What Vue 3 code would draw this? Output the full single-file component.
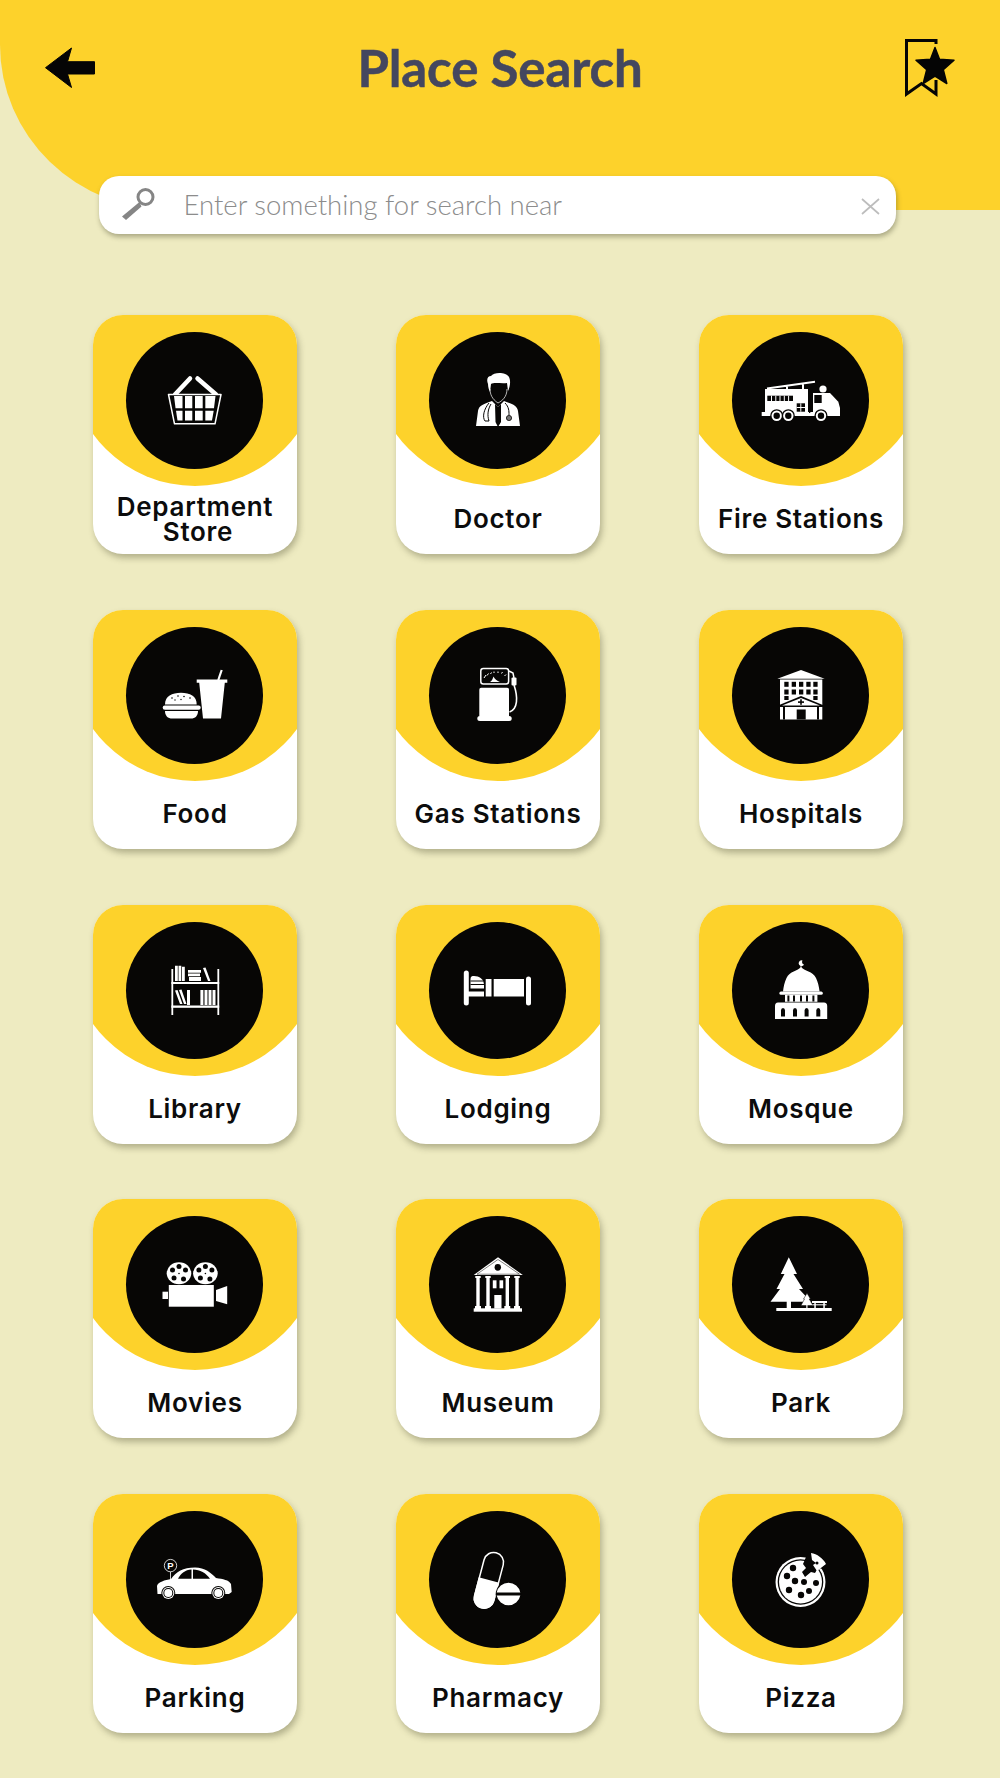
<script setup>
const places = [
  { id: 'basket', lines: ['Department', 'Store'] },
  { id: 'doctor', lines: ['Doctor'] },
  { id: 'truck', lines: ['Fire Stations'] },
  { id: 'food', lines: ['Food'] },
  { id: 'gas', lines: ['Gas Stations'] },
  { id: 'hospital', lines: ['Hospitals'] },
  { id: 'library', lines: ['Library'] },
  { id: 'bed', lines: ['Lodging'] },
  { id: 'mosque', lines: ['Mosque'] },
  { id: 'movies', lines: ['Movies'] },
  { id: 'museum', lines: ['Museum'] },
  { id: 'park', lines: ['Park'] },
  { id: 'parking', lines: ['Parking'] },
  { id: 'pharmacy', lines: ['Pharmacy'] },
  { id: 'pizza', lines: ['Pizza'] }
]
const winCols = [33.3, 40.7, 48, 55.3, 62.3]
</script>

<template>
  <div class="page">
    <header class="top">
      <svg class="back" width="50" height="41" viewBox="0 0 50 41">
        <polygon points="0.500,20.700 26.500,1 22.500,14.700 49.500,14.700 49.500,27 22.500,27 26.500,40.500" fill="#050505" stroke="#050505" stroke-linejoin="round" />
      </svg>
      <h1 class="title">Place Search</h1>
      <svg class="saved" width="50" height="58" viewBox="0 0 50 58">
        <path d="M31 5V1.500H1.500V55L16.500 44.500L31 55V41" fill="none" stroke="#050505" stroke-width="3" />
        <path d="M30 8.500L34.500 20.200L49 21.200L38.300 30.600L41.800 44.500L30 37L18.200 44.500L21.700 30.600L11 21.200L25.500 20.200Z" fill="#050505" stroke="#050505" stroke-width="1.500" stroke-linejoin="round" />
      </svg>
    </header>

    <div class="search">
      <svg class="lens" width="34" height="32" viewBox="0 0 34 32">
        <circle cx="24.500" cy="9" r="7.500" fill="none" stroke="#858585" stroke-width="3" />
        <path d="M18.500 14L1 28.500L5 32L20.500 18.500Z" fill="#858585" />
      </svg>
      <span class="hint">Enter something for search near</span>
      <svg class="clear" width="19" height="17" viewBox="0 0 19 17">
        <path d="M1 1L18 16M18 1L1 16" stroke="#bdbdbd" stroke-width="1.700" />
      </svg>
    </div>

    <main class="grid">
      <article v-for="p in places" :key="p.id" class="card">
        <div class="blob"></div>
        <div class="disc">
          <svg class="glyph" width="100" height="100" viewBox="0 0 100 100" fill="#fff">
            <g v-if="p.id === 'basket'">
              <path d="M30 43.500L45 27.500M52.500 27.500L71 43.500" stroke="#fff" stroke-width="4.500" stroke-linecap="round" fill="none" />
              <path d="M23.500 43.500H76L70 72.800H29.500Z" fill="#070605" stroke="#fff" stroke-width="1.500" stroke-linejoin="round" />
              <path d="M29 45H37.500V57.300H30.500Z" />
              <path d="M40 45H47.300V57.300H40Z" />
              <path d="M50 45H57.700V57.300H50Z" />
              <path d="M60.300 45H70.500L69 57.300H60.300Z" />
              <path d="M31 59.700H37.500V69.500H32.500Z" />
              <path d="M40 59.700H47.300V69.500H40Z" />
              <path d="M50 59.700H57.700V69.500H50Z" />
              <path d="M60.300 59.700H68.700L67 69.500H60.300Z" />
            </g>

            <g v-else-if="p.id === 'doctor'">
              <path d="M40 33C38 28 40 25 43 25C46 21 58 21 61 26C63 30 62 36 60 40L59 32C54 33 46 31 43 33L42 41C41 39 40 36 40 33Z" />
              <path d="M42 38C42 46 47 50 50 52C54 50 59 46 59 38" fill="none" stroke="#fff" stroke-width=".7" />
              <path d="M44 50C36 53 31 54 30 60L28 75H72L70 60C69 54 64 53 56 50L50 56Z" />
              <path d="M47 53L50 56L53 53V71L50 76L47.500 71Z" fill="#070605" />
              <path d="M41 52C36 58 34 66 37 70H41M43 53C40 58 39 64 41 70M57 52C61 56 61 60 61 64" fill="none" stroke="#070605" stroke-width="1" />
              <circle cx="61" cy="67" r="2.600" fill="#777" stroke="#070605" stroke-width=".8" />
            </g>

            <g v-else-if="p.id === 'truck'">
              <path d="M16 37.500L64 30.700M36 34.500V40M52 32.500V40" stroke="#fff" stroke-width="2" />
              <path d="M14 38H57V62H14Z" />
              <path d="M62 42H79L87.300 50.700L89 57V62H62Z" />
              <rect x="10.700" y="61" width="78.300" height="4" />
              <circle cx="72" cy="38" r="3.600" />
              <rect x="16.300" y="44.700" width="25.700" height="5.300" fill="#070605" />
              <path d="M20.500 44.700V50M24.800 44.700V50M29 44.700V50M33.300 44.700V50M37.600 44.700V50" stroke="#fff" stroke-width="1" />
              <rect x="45.700" y="52.300" width="8.300" height="8.400" fill="#070605" />
              <path d="M49.800 52.300V60.700M45.700 56.500H54" stroke="#fff" stroke-width="1" />
              <rect x="58" y="44" width="1.300" height="18" fill="#070605" />
              <rect x="63.300" y="44" width="7.400" height="8" fill="#070605" />
              <g v-for="x in [25.7, 37.3, 70]" :key="x">
                <circle :cx="x" cy="64.700" r="6.500" fill="#070605" />
                <circle :cx="x" cy="64.700" r="5.200" />
                <circle :cx="x" cy="64.700" r="3.200" fill="#070605" />
              </g>
            </g>

            <g v-else-if="p.id === 'food'">
              <path d="M20 59.500C20 51 27 47.800 36 47.800C45 47.800 51.700 51 51.700 59.500Z" />
              <g fill="#070605">
                <circle cx="27" cy="53" r=".8" /><circle cx="33" cy="51" r=".8" /><circle cx="39" cy="51.500" r=".8" /><circle cx="45" cy="53" r=".8" /><circle cx="30" cy="55" r=".7" /><circle cx="36" cy="54.500" r=".7" />
              </g>
              <rect x="17.700" y="60.500" width="38" height="4.300" rx="2.100" />
              <path d="M20 66H53C53 71 50 73.500 46 73.500H27C23 73.500 20 71 20 66Z" />
              <path d="M73.300 35L76.700 25" stroke="#fff" stroke-width="2.200" fill="none" />
              <path d="M51.700 34.500H82.300V37.800H79.800L76 73.500H58L54.200 37.800H51.700Z" />
            </g>

            <g v-else-if="p.id === 'gas'">
              <rect x="32.800" y="23.500" width="27.800" height="15.500" rx="2.500" fill="#070605" stroke="#fff" stroke-width="1.500" />
              <path d="M36 33L38 30M39 30.500L40.500 28.500M42.500 29L43.500 27.500M46 28V26.500M50 28V26.500M53.500 28.500L54.500 27M56.500 31L58 29.500" stroke="#fff" stroke-width="1" />
              <path d="M42 37C44 36 45 33 45.500 31.500C46.500 34 49 36 52 37Z" />
              <path d="M33.300 42.800H59C60.500 42.800 61 43.500 61 45V71H31.300V45C31.300 43.500 32 42.800 33.300 42.800Z" />
              <rect x="29.300" y="71" width="34.400" height="5" rx="2.500" />
              <path d="M61 26L65 28L66 33" fill="none" stroke="#fff" stroke-width="1.500" />
              <rect x="63.500" y="32.500" width="5" height="8" rx="1" />
              <path d="M66 40C70 52 70 64 61.500 67" fill="none" stroke="#fff" stroke-width="1.600" />
            </g>

            <g v-else-if="p.id === 'hospital'">
              <polygon points="50,25 26.300,33.800 73.700,33.800" />
              <rect x="29" y="34.500" width="42.300" height="40" />
              <g v-for="y in [36.8, 44.5]" :key="y">
                <rect v-for="x in winCols" :key="x" :x="x" :y="y" width="4.300" height="5" fill="#070605" />
              </g>
              <rect x="33.300" y="51" width="4.300" height="4" fill="#070605" />
              <rect x="62.300" y="51" width="4.300" height="4" fill="#070605" />
              <path d="M50 51L27 60.500V62H73V60.500Z" fill="#070605" />
              <path d="M50 53L31 60.500H69Z" />
              <rect x="47" y="56.300" width="6" height="1.600" fill="#070605" />
              <rect x="49.200" y="54.300" width="1.600" height="5.500" fill="#070605" />
              <rect x="32" y="62" width="2" height="12.500" fill="#070605" />
              <rect x="66" y="62" width="2" height="12.500" fill="#070605" />
              <rect x="45.700" y="64.500" width="9" height="10" fill="#070605" />
            </g>

            <g v-else-if="p.id === 'library'">
              <rect x="26.400" y="29" width="1.800" height="46" />
              <rect x="72.400" y="29" width="1.800" height="46" />
              <rect x="26.400" y="42" width="47.800" height="2" />
              <rect x="26.400" y="65.500" width="47.800" height="2.300" />
              <path d="M30 25.800H32.800V41H30ZM33.500 25.800H36.300V41H33.500ZM37 26.800H39.800V41H37Z" />
              <path d="M43 30H56V32.800H43ZM43 33.500H55V36.300H43ZM44 37H56V41H44Z" />
              <path d="M58 28L60.500 27.500L65.500 41H63Z" />
              <path d="M30 50.500L32.500 50L37.500 64H35ZM34 50L36.500 49.500L41.500 64H39Z" />
              <path d="M42 50H45V65H42Z" />
              <path d="M55.400 50H58.400V65H55.400ZM59.500 50H62.500V65H59.500ZM63.500 50H66.500V65H63.500ZM67.500 50H70.500V65H67.500Z" />
            </g>

            <g v-else-if="p.id === 'bed'">
              <rect x="15.800" y="30.500" width="5" height="35" rx="2.500" />
              <rect x="78" y="36.500" width="5" height="29" rx="2.500" />
              <path d="M20 51.500H36V56.500H20Z" />
              <path d="M22.500 48.500V39C22.500 36.500 24 36 26 36C31 36 36 39 36 45V48.500Z" />
              <path d="M22.500 41H35.500M22.500 44.500H36" stroke="#070605" stroke-width="1" />
              <rect x="37.700" y="39" width="5.800" height="17.500" />
              <rect x="45.700" y="39" width="30.300" height="17.500" />
            </g>

            <g v-else-if="p.id === 'mosque'">
              <path d="M51.500 20.500A2.800 2.800 0 1 0 53 24.500A2.600 2.600 0 0 1 51.500 20.500Z" />
              <rect x="49.600" y="25" width=".8" height="3" />
              <path d="M50 27C53 31 62 31 65 38C67 42 68 47 68.600 51.500H32C32.600 47 33.500 42 35.500 38C38.500 31 47 31 50 27Z" />
              <rect x="28.400" y="51.500" width="43.400" height="3.300" rx="1.600" />
              <rect x="34" y="54.800" width="32.400" height="7" />
              <g fill="#070605">
                <rect v-for="x in [36.4, 42, 49, 55, 61.4]" :key="x" :x="x" y="55.500" width="2" height="6" />
              </g>
              <path d="M27 62.500H73C75 62.500 76.200 64 76.200 66V79H24V66C24 64 25 62.500 27 62.500Z" />
              <g fill="#070605">
                <path v-for="x in [32, 44, 55.6, 67.3]" :key="x" :d="`M${x - 2} 76.500V70.500A2 2.500 0 0 1 ${x + 2} 70.500V76.500Z`" />
              </g>
            </g>

            <g v-else-if="p.id === 'movies'">
              <g v-for="x in [34, 60.4]" :key="x">
                <ellipse :cx="x" cy="38.300" rx="12.300" ry="11" />
                <g fill="#070605">
                  <circle :cx="x" cy="31.500" r="2.500" />
                  <circle :cx="x - 6.500" cy="35" r="2.500" />
                  <circle :cx="x + 6.500" cy="35" r="2.500" />
                  <circle :cx="x - 5" cy="43" r="2.500" />
                  <circle :cx="x + 4.500" cy="44" r="2.500" />
                  <circle :cx="x" cy="38.500" r=".8" />
                </g>
              </g>
              <rect x="23.800" y="50" width="45" height="21.700" />
              <rect x="17.500" y="56.700" width="5.500" height="7.300" />
              <polygon points="71,55 82.200,51 82.200,69.300 71,66" />
            </g>

            <g v-else-if="p.id === 'museum'">
              <path d="M50 22.300L25.700 40H74.800Z" fill="#fff" />
              <path d="M50 24.500L29 39.200H71.500Z" fill="none" stroke="#070605" stroke-width=".5" />
              <ellipse cx="49.800" cy="32.300" rx="3.200" ry="3.400" fill="#070605" />
              <path v-for="x in [30, 40, 59.300, 69]" :key="x" :d="`M${x - 2.700} 41H${x + 2.700}V43H${x + 1.700}V71H${x + 3}V74H${x - 3}V71H${x - 1.700}V43H${x - 2.700}Z`" />
              <rect x="25.700" y="73.300" width="48.300" height="3.400" />
              <rect x="44.800" y="45.300" width="3.700" height="8" />
              <rect x="51.500" y="45.300" width="3.700" height="8" />
              <rect x="46.300" y="60" width="7.200" height="13.500" />
            </g>

            <g v-else-if="p.id === 'park'">
              <path d="M37.800 22.300L46 39H42.500L52 54H48L60 66.700H19.500L29 54H25.500L33.500 39H29.800Z" />
              <rect x="35.700" y="66" width="4.300" height="8" />
              <rect x="25.300" y="73" width="55.400" height="3" />
              <path d="M56 58.300L59.500 64H58.200L62 70.500H50L53.500 64H52.500Z" stroke="#070605" stroke-width=".5" />
              <rect x="55.300" y="70" width="1.200" height="4" />
              <rect x="61" y="66" width="15" height="2" />
              <rect x="61.500" y="69.300" width="14" height="1" />
              <rect x="63.300" y="68" width="1.500" height="6" />
              <rect x="72.300" y="68" width="1.500" height="6" />
            </g>

            <g v-else-if="p.id === 'parking'">
              <circle cx="25.500" cy="35.600" r="6.200" fill="none" stroke="#fff" stroke-width=".8" />
              <text x="25.500" y="39" text-anchor="middle" class="sign">P</text>
              <rect x="25.100" y="41.800" width=".8" height="9" />
              <path d="M12.500 64L12 56C13 52 20 50 26 49C31 42 38 37.600 50 37.600C60 37.600 66 43 71 48C78 49 84 50 86 54L86.700 62L84 64H12.500Z" />
              <path d="M33 48.800C36 43 40 40 46.500 39.500V48.800Z" fill="#070605" />
              <path d="M48 39.500C55 39.500 61 43 65 48.800H48Z" fill="#070605" />
              <g v-for="x in [23.300, 73.300]" :key="x">
                <circle :cx="x" cy="63" r="7" fill="#070605" />
                <circle :cx="x" cy="63" r="6" />
                <circle :cx="x" cy="63" r="5" fill="#070605" />
                <circle :cx="x" cy="63" r="4" />
              </g>
            </g>

            <g v-else-if="p.id === 'pharmacy'">
              <g transform="rotate(14.8 40.900 50.300)">
                <rect x="31" y="21.800" width="19.800" height="57" rx="9.900" fill="#070605" stroke="#fff" stroke-width="1.500" />
                <path d="M30.300 50H51.500V69C51.500 75 46.500 79.500 40.900 79.500C35.300 79.500 30.300 75 30.300 69Z" />
              </g>
              <circle cx="60.500" cy="64.300" r="12.800" fill="#070605" />
              <path d="M48.700 62.500A12 12 0 0 1 72.300 62.500ZM48.700 65.500H72.300A12 12 0 0 1 48.700 65.500Z" />
            </g>

            <g v-else-if="p.id === 'pizza'">
              <circle cx="49.500" cy="52" r="25" />
              <circle cx="49.500" cy="52" r="22.800" fill="#070605" />
              <circle cx="49.500" cy="52" r="21.500" />
              <g fill="#070605">
                <circle cx="42" cy="38" r="3.200" />
                <circle cx="36" cy="46" r="3.200" />
                <circle cx="44" cy="51" r="3.200" />
                <circle cx="53" cy="52" r="3" />
                <circle cx="65" cy="53" r="3" />
                <circle cx="58" cy="61" r="3" />
                <circle cx="38" cy="60" r="3.200" />
                <circle cx="50" cy="65" r="3.200" />
              </g>
              <path d="M55 27L52 34L55 38L51 42L54 47L60 42L64 43L67 38L78 40L78 24L60 20Z" fill="#070605" />
              <path d="M60 23C66 24 72 28 75 34L66 41L62 35L65 33L61 30Z" />
              <circle cx="66" cy="33" r="1.500" fill="#070605" />
            </g>
          </svg>
        </div>
        <p class="label">
          <span v-for="(line, i) in p.lines" :key="line" class="line" :class="{ nudged: i === 1 }">{{ line }}</span>
        </p>
      </article>
    </main>
  </div>
</template>

<style>
html, body { margin: 0; background: #eeebc1; }
</style>

<style scoped>
.page {
  width: 1000px;
  height: 1778px;
  overflow: hidden;
  background: #eeebc1;
  font-family: "Lato", "Liberation Sans", sans-serif;
}
.top {
  height: 210px;
  box-sizing: border-box;
  padding: 39px 45px 0 45px;
  display: flex;
  justify-content: space-between;
  align-items: flex-start;
  background: #fdd22b;
  border-bottom-left-radius: 170px 165px;
}
.back { margin-top: 8px; }
.title {
  margin: 1px 0 0;
  font-size: 51px;
  line-height: 56px;
  font-weight: 700;
  letter-spacing: -.1px;
  color: #44475f;
  -webkit-text-stroke: .5px #44475f;
}
.search {
  position: relative;
  width: 797px;
  height: 58px;
  box-sizing: border-box;
  margin: -34px 0 0 98.500px;
  padding: 0 16px 0 22px;
  display: flex;
  align-items: center;
  background: #fff;
  border-radius: 20px;
  box-shadow: 1px 3px 5px rgba(70, 70, 40, .4);
}
.lens { flex: none; margin-top: -3px; }
.hint {
  flex: 1;
  margin: -2px 0 0 29px;
  font-size: 27.500px;
  font-weight: 300;
  color: #8c8c8c;
}
.clear { flex: none; margin-top: 2px; }
.grid {
  margin: 81px 0 0 93px;
  display: grid;
  grid-template-columns: repeat(3, 204px);
  grid-auto-rows: 239px;
  column-gap: 99px;
  row-gap: 55.750px;
}
.card {
  position: relative;
  overflow: hidden;
  display: flex;
  flex-direction: column;
  align-items: center;
  background: #fff;
  border-radius: 30px;
  box-shadow: 2px 4px 6px rgba(70, 70, 40, .35);
}
.blob {
  position: absolute;
  left: -24px;
  top: -81px;
  width: 252px;
  height: 252px;
  border-radius: 50%;
  background: #fdd22b;
}
.disc {
  position: relative;
  flex: none;
  width: 137px;
  height: 137px;
  margin: 17px 1px 0 0;
  display: flex;
  align-items: center;
  justify-content: center;
  border-radius: 50%;
  background: #070605;
}
.glyph { display: block; }
.sign { font: 700 9.500px "Liberation Sans", sans-serif; fill: #fff; }
.label {
  position: relative;
  flex: 1;
  margin: 0;
  padding-top: 14px;
  display: flex;
  flex-direction: column;
  justify-content: center;
  align-items: center;
  font-family: "Inter", "Liberation Sans", sans-serif;
  font-size: 26px;
  font-weight: 600;
  letter-spacing: .7px;
  line-height: 25px;
  color: #0c0c0c;
}
.line { display: block; white-space: nowrap; }
.nudged { padding-left: 6px; }
</style>
